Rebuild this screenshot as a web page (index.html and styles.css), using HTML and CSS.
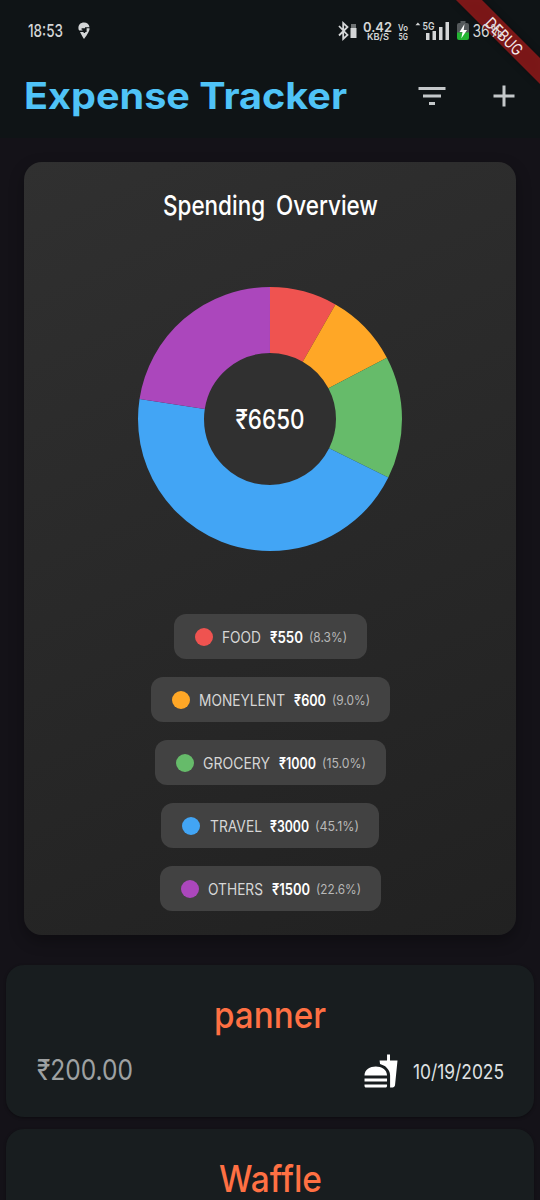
FILE: index.html
```html
<!DOCTYPE html>
<html lang="en">
<head>
<meta charset="utf-8">
<title>Expense Tracker</title>
<link rel="stylesheet" href="styles.css">
</head>
<body>
<div class="screen">
  <header class="top">
    <div class="status">
      <svg class="label clock" width="35" height="20"><text y="17" textLength="35" lengthAdjust="spacingAndGlyphs">18:53</text></svg>
      <svg class="pin" width="12" height="18" viewBox="0 0 12 18"><path d="M6 .5C2.600.5.4 2.700.4 6c0 1 .3 1.900.8 2.600H4.500V7.800H3.600V6.300h5v3.600H7.200v1.200H5.600V9.900H2c.8 1.700 2.500 4.500 4 7.100 2.400-3.300 5.300-7.400 5.500-9.800V6.300H7V3.500H6v1.800h5.500C11.200 2.500 9 .5 6 .5z"/></svg>
      <svg class="indicators" width="170" height="30" viewBox="335 15 170 30">
        <path class="line" d="M339 26l8.500 9-4.300 4V23l4.300 4-8.500 8.500"/>
        <path class="dim" d="M351 24h5v4h-5z"/><path d="M350.500 28h6v10h-6z"/>
        <text class="speed" x="363" y="32" textLength="29" lengthAdjust="spacingAndGlyphs">0.42</text>
        <text class="unit" x="367" y="40" textLength="22" lengthAdjust="spacingAndGlyphs">KB/S</text>
        <text class="volte" x="398" y="30.500" textLength="10" lengthAdjust="spacingAndGlyphs">Vo</text>
        <text class="volte" x="398.500" y="39.500" textLength="9.500" lengthAdjust="spacingAndGlyphs">5G</text>
        <path d="M415.500 25.200l2.400-2.700 2.400 2.700z"/>
        <text class="net" x="422.500" y="29.500" textLength="12" lengthAdjust="spacingAndGlyphs">5G</text>
        <path d="M426 33h3.500v7H426zM432.500 31h3.500v9h-3.500zM439 27h3.500v13H439zM445.500 22h3.500v18h-3.500z"/>
        <path class="shell" d="M460.500 21h5v2h1.500a2 2 0 0 1 2 2v8h-12v-8a2 2 0 0 1 2-2h1.500z"/>
        <path class="charge" d="M457 32.500h12V38a2 2 0 0 1-2 2h-8a2 2 0 0 1-2-2z"/>
        <path class="bolt" d="M464.500 24l-5 8h3l-1.200 6.500 5.700-8.500h-3.300z"/>
        <text class="percent" x="472.500" y="37" textLength="31" lengthAdjust="spacingAndGlyphs">36%</text>
      </svg>
    </div>
    <div class="appbar">
      <svg class="label title" width="323" height="50"><text y="38" textLength="323" lengthAdjust="spacingAndGlyphs">Expense Tracker</text></svg>
      <div class="actions">
        <svg width="36" height="36" viewBox="0 0 24 24"><path d="M10 18h4v-2h-4v2zM3 6v2h18V6H3zm3 7h12v-2H6v2z"/></svg>
        <svg width="36" height="36" viewBox="0 0 24 24"><path d="M19 13h-6v6h-2v-6H5v-2h6V5h2v6h6v2z"/></svg>
      </div>
    </div>
  </header>

  <svg class="banner" width="100" height="100" viewBox="440 0 100 100">
    <path d="M456 0h26l58 58v26z"/>
    <text transform="translate(504 36.500) rotate(45)" x="-23" y="5.500" textLength="46" lengthAdjust="spacingAndGlyphs">DEBUG</text>
  </svg>

  <section class="overview">
    <svg class="label heading" width="215" height="34"><text y="27" textLength="215" lengthAdjust="spacingAndGlyphs">Spending Overview</text></svg>
    <svg class="donut" width="264" height="264" viewBox="-132 -132 264 264">
      <circle class="core" r="67"/>
      <g transform="rotate(-90)">
        <circle class="slice food" r="99" pathLength="6650" stroke-dasharray="550 6100"/>
        <circle class="slice lent" r="99" pathLength="6650" stroke-dasharray="600 6050" stroke-dashoffset="-550"/>
        <circle class="slice grocery" r="99" pathLength="6650" stroke-dasharray="1000 5650" stroke-dashoffset="-1150"/>
        <circle class="slice travel" r="99" pathLength="6650" stroke-dasharray="3000 3650" stroke-dashoffset="-2150"/>
        <circle class="slice others" r="99" pathLength="6650" stroke-dasharray="1500 5150" stroke-dashoffset="-5150"/>
      </g>
      <text x="-34.500" y="10" textLength="69" lengthAdjust="spacingAndGlyphs">₹6650</text>
    </svg>
    <ul class="legend">
      <li class="chip"><i class="dot food"></i>
        <svg class="label name" width="39" height="20"><text y="16" textLength="39" lengthAdjust="spacingAndGlyphs">FOOD</text></svg>
        <svg class="label amount" width="33" height="20"><text y="16" textLength="33" lengthAdjust="spacingAndGlyphs">₹550</text></svg>
        <svg class="label share" width="38" height="20"><text y="14.500" textLength="38" lengthAdjust="spacingAndGlyphs">(8.3%)</text></svg></li>
      <li class="chip"><i class="dot lent"></i>
        <svg class="label name" width="86" height="20"><text y="16" textLength="86" lengthAdjust="spacingAndGlyphs">MONEYLENT</text></svg>
        <svg class="label amount" width="32" height="20"><text y="16" textLength="32" lengthAdjust="spacingAndGlyphs">₹600</text></svg>
        <svg class="label share" width="38" height="20"><text y="14.500" textLength="38" lengthAdjust="spacingAndGlyphs">(9.0%)</text></svg></li>
      <li class="chip"><i class="dot grocery"></i>
        <svg class="label name" width="67" height="20"><text y="16" textLength="67" lengthAdjust="spacingAndGlyphs">GROCERY</text></svg>
        <svg class="label amount" width="37" height="20"><text y="16" textLength="37" lengthAdjust="spacingAndGlyphs">₹1000</text></svg>
        <svg class="label share" width="44" height="20"><text y="14.500" textLength="44" lengthAdjust="spacingAndGlyphs">(15.0%)</text></svg></li>
      <li class="chip"><i class="dot travel"></i>
        <svg class="label name" width="52" height="20"><text y="16" textLength="52" lengthAdjust="spacingAndGlyphs">TRAVEL</text></svg>
        <svg class="label amount" width="39" height="20"><text y="16" textLength="39" lengthAdjust="spacingAndGlyphs">₹3000</text></svg>
        <svg class="label share" width="44" height="20"><text y="14.500" textLength="44" lengthAdjust="spacingAndGlyphs">(45.1%)</text></svg></li>
      <li class="chip"><i class="dot others"></i>
        <svg class="label name" width="55" height="20"><text y="16" textLength="55" lengthAdjust="spacingAndGlyphs">OTHERS</text></svg>
        <svg class="label amount" width="38" height="20"><text y="16" textLength="38" lengthAdjust="spacingAndGlyphs">₹1500</text></svg>
        <svg class="label share" width="45" height="20"><text y="14.500" textLength="45" lengthAdjust="spacingAndGlyphs">(22.6%)</text></svg></li>
    </ul>
  </section>

  <section class="expenses">
    <article class="expense">
      <svg class="label item" width="112" height="48"><text y="36" textLength="112" lengthAdjust="spacingAndGlyphs">panner</text></svg>
      <div class="details">
        <svg class="label price" width="97" height="36"><text x="1" y="27" textLength="96" lengthAdjust="spacingAndGlyphs">₹200.00</text></svg>
        <svg class="meal" width="36" height="36" viewBox="0 0 24 24"><path d="M18.060 22.990h1.660c.84 0 1.530-.64 1.630-1.460L23 5.050h-5V1h-1.970v4.050h-4.970l.3 2.340c1.710.47 3.310 1.320 4.270 2.260 1.440 1.420 2.430 2.890 2.430 5.290v8.050zM1 21.990V21h15.030v.99c0 .55-.45 1-1.010 1H2.010c-.56 0-1.010-.45-1.010-1zm15.030-7c0-8-15.030-8-15.030 0h15.030zM1.020 17h15v2h-15z"/></svg>
        <svg class="label date" width="91" height="36"><text y="25.500" textLength="91" lengthAdjust="spacingAndGlyphs">10/19/2025</text></svg>
      </div>
    </article>
    <article class="expense">
      <svg class="label item" width="103" height="48"><text y="36" textLength="103" lengthAdjust="spacingAndGlyphs">Waffle</text></svg>
    </article>
  </section>
</div>
</body>
</html>
```

FILE: styles.css
```css
* { box-sizing: border-box; }
body { margin: 0; background: #141218; font-family: Inter, "Noto Sans", sans-serif; }
svg { display: block; flex: none; }
.label { overflow: visible; }
.screen { position: relative; width: 540px; height: 1200px; overflow: hidden; }

.food { --tone: #ef5350; }
.lent { --tone: #ffa726; }
.grocery { --tone: #66bb6a; }
.travel { --tone: #42a5f5; }
.others { --tone: #ab47bc; }

.top { height: 138px; background: #0f1416; }
.status { display: flex; padding: 15px 35px 0 28px; height: 54px; align-items: flex-start; fill: #d4d6d7; }
.clock { margin-top: 5px; font-size: 17.500px; font-weight: 500; }
.pin { margin: 7px 0 0 15px; }
.indicators { position: relative; z-index: 3; margin-left: auto; }
.line { fill: none; stroke: #d4d6d7; stroke-width: 1.800; }
.dim { fill: #6e7273; }
.speed { font-size: 13.500px; font-weight: 600; }
.unit { font-size: 8.500px; font-weight: 600; }
.volte { font-size: 9px; font-weight: 600; }
.net { font-size: 10.500px; font-weight: 600; }
.shell { fill: #555a5c; }
.charge { fill: #24b533; }
.bolt { fill: #fff; }
.percent { font-size: 17px; }

.appbar { display: flex; justify-content: space-between; align-items: center; height: 84px; padding: 0 18px 0 24px; }
.title { font-size: 36.500px; font-weight: 700; fill: #4fc3f7; }
.actions { display: flex; gap: 36px; fill: #c4c8ca; }

.banner { position: absolute; top: 0; right: 0; z-index: 2; }
.banner path { fill: #b71c1c; fill-opacity: .65; filter: drop-shadow(0 0 3px rgba(0, 0, 0, .5)); }
.banner text { fill: #f5e9e9; font-size: 16px; font-weight: 400; }

.overview { display: flex; flex-direction: column; align-items: center; width: 492px; height: 773.500px; margin: 23.500px auto 0; padding-top: 26px; border-radius: 18px; background: linear-gradient(155deg, #303030, #212121); box-shadow: 0 6px 15px rgba(0, 0, 0, .3); }
.heading { font-size: 27px; font-weight: 500; word-spacing: 6px; fill: #fff; }
.donut { margin-top: 65.500px; }
.core { fill: #303030; }
.slice { fill: none; stroke: var(--tone); stroke-width: 66; }
.donut text { fill: #fff; font-size: 26.500px; font-weight: 500; }
.legend { display: flex; flex-direction: column; align-items: center; gap: 18px; margin: 63px 0 0; padding: 0; list-style: none; }
.chip { display: flex; align-items: center; height: 45px; padding: 0 20px 0 21px; border-radius: 12px; background: #424242; }
.dot { width: 18px; height: 18px; margin-right: 9.500px; border-radius: 50%; background: var(--tone); }
.name { font-size: 15.500px; fill: #d6d6d6; }
.amount { margin: 0 6px 0 8.500px; font-size: 15.500px; font-weight: 600; fill: #fff; }
.share { font-size: 13px; fill: #b8b8b8; }

.expenses { display: flex; flex-direction: column; gap: 12px; padding: 30px 6px 0; }
.expense { display: flex; flex-direction: column; align-items: center; height: 151.500px; padding: 27px 30px 0; border-radius: 18px; background: #181d1f; box-shadow: 0 1px 3px rgba(0, 0, 0, .35); }
.item { font-size: 37px; font-weight: 500; fill: #ff7043; }
.details { display: flex; width: 100%; padding-top: 13px; }
.price { font-size: 28.500px; fill: #9ea1a2; }
.meal { margin: 0 14px 0 auto; fill: #fff; }
.date { font-size: 20px; fill: #dfe1e2; }
```
